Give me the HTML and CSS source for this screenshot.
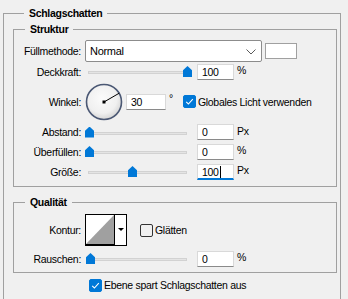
FILE: index.html
```html
<!DOCTYPE html>
<html lang="de">
<head>
  <meta charset="UTF-8" />
  <title>Schlagschatten</title>
  <link rel="stylesheet" href="styles.css">
</head>
<body>
  <fieldset class="group outer">
    <legend>Schlagschatten</legend>

    <fieldset class="group struktur">
      <legend>Struktur</legend>

      <div class="row row-blend">
        <span class="label">Füllmethode:</span>
        <div class="select">
          <span>Normal</span>
          <svg class="chevron" width="10" height="6" viewBox="0 0 10 6"><path d="M0.5 0.5 L5 5 L9.5 0.5" fill="none" stroke="#5a5a5a" stroke-width="1"/></svg>
        </div>
        <div class="swatch"></div>
      </div>

      <div class="row row-opacity">
        <span class="label">Deckkraft:</span>
        <div class="slider"><div class="track"></div><div class="thumb" style="left: 98px"></div></div>
        <div class="field">100</div>
        <span class="unit">%</span>
      </div>

      <div class="row row-angle">
        <span class="label">Winkel:</span>
        <svg class="dial" width="38" height="38" viewBox="0 0 38 38">
          <defs>
            <radialGradient id="dialFill" cx="45%" cy="40%" r="60%">
              <stop offset="0" stop-color="#fbfbfb"/>
              <stop offset="0.7" stop-color="#f0f0f0"/>
              <stop offset="1" stop-color="#d6d6d6"/>
            </radialGradient>
          </defs>
          <circle cx="19" cy="19" r="17.5" fill="url(#dialFill)" stroke="#4b5874" stroke-width="1.6"/>
          <line x1="19" y1="19" x2="34.2" y2="10.2" stroke="#000" stroke-width="1"/>
          <rect x="17.5" y="17.5" width="3" height="3" fill="#000"/>
        </svg>
        <div class="field field-angle">30</div>
        <span class="degree">°</span>
        <span class="check checked"><svg width="13" height="13" viewBox="0 0 13 13"><path d="M3.2 6.8 L5.4 9 L9.8 4.2" fill="none" stroke="#fff" stroke-width="1.1"/></svg></span>
        <span class="check-text">Globales Licht verwenden</span>
      </div>

      <div class="row row-distance">
        <span class="label">Abstand:</span>
        <div class="slider"><div class="track"></div><div class="thumb" style="left: 0px"></div></div>
        <div class="field">0</div>
        <span class="unit">Px</span>
      </div>

      <div class="row row-spread">
        <span class="label">Überfüllen:</span>
        <div class="slider"><div class="track"></div><div class="thumb" style="left: 0px"></div></div>
        <div class="field">0</div>
        <span class="unit">%</span>
      </div>

      <div class="row row-size">
        <span class="label">Größe:</span>
        <div class="slider"><div class="track"></div><div class="thumb" style="left: 43px"></div></div>
        <div class="field focused">100<span class="caret"></span></div>
        <span class="unit">Px</span>
      </div>
    </fieldset>

    <fieldset class="group qualitaet">
      <legend>Qualität</legend>

      <div class="row row-contour">
        <span class="label">Kontur:</span>
        <svg class="contour" width="42" height="32" viewBox="0 0 42 32">
          <rect x="0" y="0" width="42" height="32" fill="#000"/>
          <rect x="1" y="1" width="28" height="29" fill="#fff"/>
          <polygon points="1,30 29,1 29,30" fill="#a0a0a0"/>
          <rect x="30" y="1" width="11" height="30" fill="#fff"/>
          <polygon points="33,14 39,14 36,17" fill="#000"/>
        </svg>
        <span class="check"></span>
        <span class="check-text">Glätten</span>
      </div>

      <div class="row row-noise">
        <span class="label">Rauschen:</span>
        <div class="slider"><div class="track"></div><div class="thumb" style="left: 1px"></div></div>
        <div class="field">0</div>
        <span class="unit">%</span>
      </div>
    </fieldset>

    <div class="row row-knockout">
      <span class="check checked"><svg width="13" height="13" viewBox="0 0 13 13"><path d="M3.2 6.8 L5.4 9 L9.8 4.2" fill="none" stroke="#fff" stroke-width="1.1"/></svg></span>
      <span class="check-text">Ebene spart Schlagschatten aus</span>
    </div>
  </fieldset>
</body>
</html>
```

FILE: styles.css
```css
* {
  box-sizing: border-box;
}

body {
  margin: 0;
  height: 299px;
  overflow: hidden;
  background: #f0f0f0;
  font-family: "Liberation Sans", Arial, sans-serif;
  font-size: 10.5px;
  letter-spacing: -0.3px;
  color: #000;
}

/* group boxes */
.group {
  margin: 0;
  padding: 0;
  min-width: 0;
  border: 1px solid #a0a0a0;
}

.group > legend {
  margin-left: 11px;
  padding: 0 5px;
  font-weight: bold;
  line-height: 14px;
}

.outer {
  margin: 6px 0 0 3px;
  width: 338px;
  height: 293px;
  padding: 0 3px 0 9px;
  border-bottom: none;
}

.struktur {
  margin-top: 2px;
  padding-bottom: 4px;
}

.qualitaet {
  margin-top: 8px;
  padding-bottom: 5px;
}

/* rows */
.row {
  display: flex;
  align-items: center;
}

.label {
  flex: none;
  width: 67px;
  margin-right: 4px;
  text-align: right;
}

.row-blend { margin-top: 4px; height: 22px; }
.row-opacity { height: 19px; }
.row-angle { height: 41px; }
.row-distance { height: 20px; }
.row-spread { height: 19px; }
.row-size { height: 21px; }
.row-contour { margin-top: 5px; height: 32px; }
.row-noise { margin-top: 4px; height: 17px; }
.row-knockout { margin: 5px 0 0 76px; height: 14px; }

/* dropdown + colour */
.select {
  display: flex;
  align-items: center;
  justify-content: space-between;
  width: 177px;
  height: 22px;
  padding: 0 4px 0 4px;
  background: #fff;
  border: 1px solid #8c8c8c;
  border-radius: 2px;
  font-size: 11px;
}

.chevron {
  margin: 1px 1px 0 0;
}

.swatch {
  width: 32px;
  height: 16px;
  margin-left: 3px;
  background: #fff;
  border: 1px solid #a0a0a0;
}

/* sliders */
.slider {
  position: relative;
  flex: none;
  width: 106px;
  height: 11px;
}

.track {
  margin: 5px 4px 0 3px;
  height: 3px;
  background: #e4e4e4;
  border: 1px solid #d2d2d2;
}

.thumb {
  position: absolute;
  top: 0;
  width: 9px;
  height: 11px;
  background: #0078d7;
  clip-path: polygon(50% 0, 100% 38%, 100% 100%, 0 100%, 0 38%);
}

/* number fields */
.field {
  display: flex;
  align-items: center;
  width: 37px;
  height: 16px;
  margin-left: 6px;
  padding-left: 4px;
  background: #fff;
  border: 1px solid #d9d9d9;
  border-bottom-color: #8a8a8a;
  font-size: 10.5px;
}

.field.focused {
  border-bottom: 2px solid #0078d7;
  margin-top: 1px;
}

.caret {
  width: 1px;
  height: 12px;
  margin-left: 1px;
  background: #000;
}

.unit {
  margin: 0 0 3px 3px;
}

/* angle */
.dial {
  flex: none;
}

.field-angle {
  width: 40px;
  margin-left: 3px;
}

.degree {
  align-self: flex-start;
  margin: 11px 0 0 3px;
}

/* checkboxes */
.check {
  flex: none;
  width: 13px;
  height: 13px;
  border: 1px solid #333;
  border-radius: 2px;
}

.check.checked {
  background: #0078d7;
  border-color: #0078d7;
}

.check.checked svg {
  display: block;
  margin: -1px;
}

.row-angle .check {
  margin-left: 10px;
}

.row-contour .check {
  margin-left: 13px;
}

.check-text {
  margin-left: 2px;
}
```
